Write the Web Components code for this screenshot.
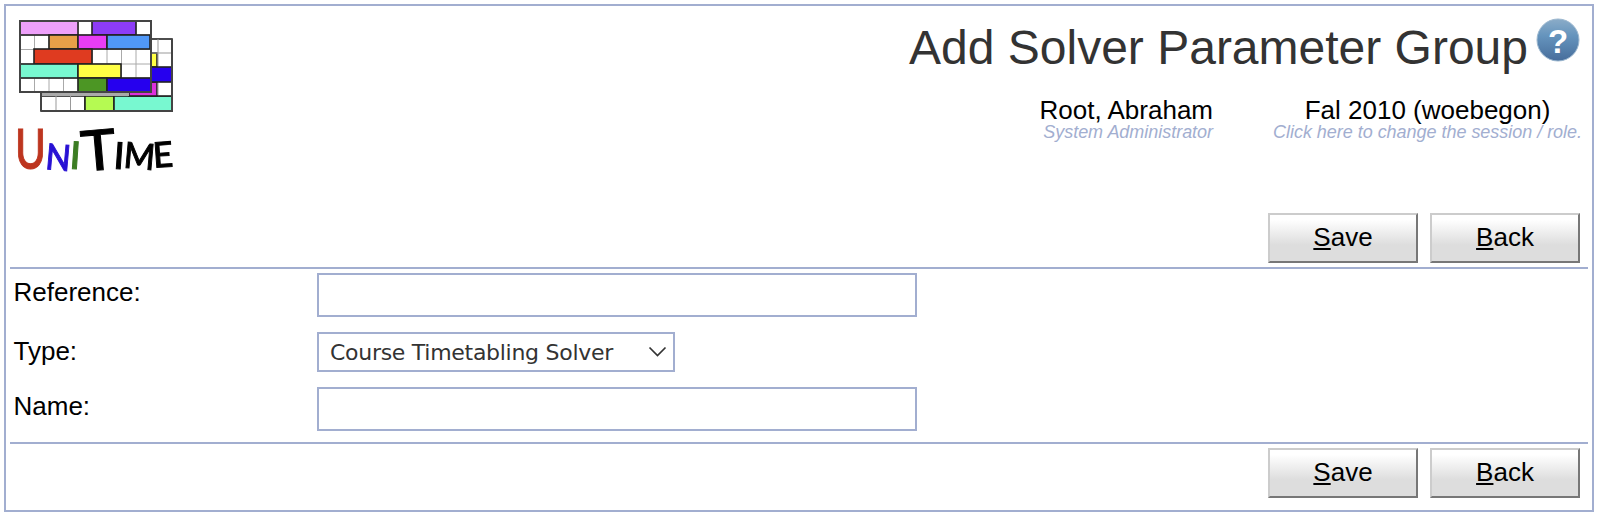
<!DOCTYPE html>
<html lang="en">
<head>
<meta charset="utf-8">
<title>Add Solver Parameter Group</title>
<style>
html{background:#fff}
body{margin:0;padding:4px 6px 4px 4px;font-family:"Liberation Sans",Arial,sans-serif;font-size:26px;color:#000;--line:#a2aed0}
</style>
</head>
<body>
<ut-page>
  <ut-header>
    <ut-logo slot="logo"></ut-logo>
    <span slot="title">Add Solver Parameter Group</span>
    <ut-help slot="help"></ut-help>
    <ut-info slot="info">Root, Abraham<span slot="note">System Administrator</span></ut-info>
    <ut-info slot="info">Fal 2010 (woebegon)<span slot="note">Click here to change the session / role.</span></ut-info>
  </ut-header>
  <ut-buttons><ut-button key="S">ave</ut-button><ut-button key="B">ack</ut-button></ut-buttons>
  <ut-form>
    <ut-field label="Reference:"><ut-input></ut-input></ut-field>
    <ut-field label="Type:"><ut-select>Course Timetabling Solver</ut-select></ut-field>
    <ut-field label="Name:"><ut-input></ut-input></ut-field>
  </ut-form>
  <ut-buttons><ut-button key="S">ave</ut-button><ut-button key="B">ack</ut-button></ut-buttons>
</ut-page>
<script>
const define = (name, render) => customElements.define(name, class extends HTMLElement {
  constructor() {
    super();
    this.attachShadow({mode: 'open'});
  }
  connectedCallback() {
    this.shadowRoot.innerHTML = render(this);
  }
});

define('ut-page', () => `<style>
:host{display:flex;flex-direction:column;box-sizing:border-box;height:508px;border:2px solid var(--line);padding:4px}
</style><slot></slot>`);

define('ut-header', () => `<style>
:host{display:flex;justify-content:space-between;height:199px}
.right{display:flex;flex-direction:column;align-items:flex-end;padding-right:6px}
.title{display:flex;align-items:flex-start;gap:8px;height:84px;padding-right:2px;color:#333;font-size:48px;line-height:54px}
.text{padding-top:11px}
.help{padding-top:8px}
.info{display:flex;gap:60px}
</style><slot name="logo"></slot>
<div class="right"><div class="title"><div class="text"><slot name="title"></slot></div><div class="help"><slot name="help"></slot></div></div>
<div class="info"><slot name="info"></slot></div></div>`);

define('ut-info', () => `<style>
:host{display:flex;flex-direction:column;align-items:center;line-height:30px}
.note{font-size:18px;line-height:20px;font-style:italic;color:var(--line);margin-top:-2px;align-self:flex-end;letter-spacing:-.03px}
.name{padding-top:1px;height:29px}
</style><div class="name"><slot></slot></div><div class="note"><slot name="note"></slot></div>`);

define('ut-help', () => `<style>
:host{display:block;width:44px;height:44px}svg{display:block;overflow:visible}
text{font:bold 33px/1 "Liberation Sans",sans-serif;fill:#fff}
</style><svg width="44" height="44" viewBox="0 0 44 44">
<defs><linearGradient id="g" x2="0" y2="1"><stop offset="0" stop-color="#8bacc8"/><stop offset=".4" stop-color="#6594bd"/><stop offset="1" stop-color="#476d9b"/></linearGradient></defs>
<circle cx="22" cy="22" r="21" fill="url(#g)" stroke="#9bb7cf"/>
<text x="22" y="34.500" text-anchor="middle">?</text></svg>`);

/* Timetable blocks: x, y, width, height, fill */
const back = [[41,96,44,15,'#fff'],[85,96,29,15,'#b5fa52'],[114,96,58,15,'#78f8d0'],[151,39,21,57,'#fff'],[129,82,28,14,'#dd30dd'],[151,53,6,14,'#ffff45'],[151,67,21,15,'#2600ee']];
const front = [[20,21,58,14,'#eea0fa'],[92,21,44,14,'#8d3cf7'],[49,35,29,14,'#e79f48'],[78,35,29,14,'#e83df5'],[107,35,43,14,'#5098f8'],[34,49,58,15,'#df3b20'],[20,64,58,14,'#78f8d0'],[78,64,43,14,'#ffff45'],[78,78,29,14,'#4c9624'],[107,78,44,14,'#2600ee']];
const block = ([x, y, w, h, f]) => `<rect x="${x}" y="${y}" width="${w}" height="${h}" fill="${f}" stroke="#222" stroke-width="1.6"/>`;
define('ut-logo', () => `<style>
:host{display:block;width:180px;height:180px}svg{display:block}
.art{filter:blur(.5px)}
text{font-family:Lato,"Liberation Sans",sans-serif;font-weight:500}
</style><svg width="180" height="180" viewBox="10 10 180 180">
<g class="art">
${back.map(block).join('')}
<path d="M56 96V111M70.500 96V111M158 39V66M158 83V95M152 53H172" stroke="#999" fill="none"/>
<rect x="41" y="92" width="88" height="4" fill="#aaa"/>
<path d="M41 111V92M172 39V111H41" stroke="#444" stroke-width="2" fill="none"/>
<rect x="20" y="21" width="131" height="71" fill="#fff"/>
<path d="M34.500 21V92M49 21V92M63.500 21V92M78 21V92M92.500 21V92M107 21V92M121.500 21V92M136 21V92M20 35H151M20 49.500H151M20 64H151M20 78H151" stroke="#aaa" fill="none"/>
${front.map(block).join('')}
<rect x="20" y="21" width="131" height="71" fill="none" stroke="#444" stroke-width="2"/>
</g>
<g class="art">
<text font-size="55" textLength="31" lengthAdjust="spacingAndGlyphs" x="15" y="169" fill="#bd351f" stroke="#bd351f">U</text>
<text font-size="36" textLength="25" lengthAdjust="spacingAndGlyphs" x="46" y="170" fill="#2811d4" stroke="#2811d4" transform="rotate(5 58 156)">N</text>
<text font-size="38" x="70" y="169" fill="#3c7d23" stroke="#3c7d23" transform="rotate(4 76 156)">I</text>
<text font-size="56" textLength="35" lengthAdjust="spacingAndGlyphs" x="81" y="170" stroke="#000" transform="rotate(-5 99 150)">T</text>
<text font-size="37" x="114" y="169" stroke="#000" transform="rotate(4 120 156)">I</text>
<text font-size="36" textLength="31" lengthAdjust="spacingAndGlyphs" x="124" y="169" stroke="#000" transform="rotate(5 140 156)">M</text>
<text font-size="35" textLength="20" lengthAdjust="spacingAndGlyphs" x="153" y="167" stroke="#000" transform="rotate(-4 163 156)">E</text>
</g></svg>`);

define('ut-buttons', () => `<style>
:host{display:flex;justify-content:flex-end;gap:12px;padding:4px 8px 4px 0}
</style><slot></slot>`);

define('ut-button', el => `<style>
:host{display:block}
button{display:block;box-sizing:border-box;width:150px;height:50px;margin:0;padding:0 0 2px;border:2px solid;border-color:#ccc #777 #777 #ccc;background:linear-gradient(#fff 10%,#ddd 65%,#ddd);font:inherit;color:#000}
u{text-decoration-thickness:2px;text-underline-offset:2px;text-decoration-skip-ink:none}
</style><button><u>${el.getAttribute('key')}</u><slot></slot></button>`);

define('ut-form', () => `<style>
:host{display:flex;flex-direction:column;gap:15px;border:solid var(--line);border-width:2px 0;padding:4px 0 11px 4px}
</style><slot></slot>`);

define('ut-field', el => `<style>
:host{display:grid;grid-template-columns:303px 600px;line-height:30px}
label{padding-top:4px;margin-left:-.5px}
</style><label>${el.getAttribute('label')}</label><slot></slot>`);

define('ut-input', () => `<style>
:host{display:block}
input{display:block;box-sizing:border-box;width:600px;height:44px;margin:0;border:2px solid var(--line);background:#fff;font:inherit;outline:0}
</style><input>`);

define('ut-select', () => `<style>
:host{display:flex;box-sizing:border-box;width:358px;height:40px;border:2px solid var(--line);padding:0 6px 0 11px;align-items:center;justify-content:space-between;font-family:"DejaVu Sans",sans-serif;font-size:22px;letter-spacing:-.28px;color:#333;white-space:nowrap}
span{padding-top:2px}
svg{flex:none}
</style><span><slot></slot></span><svg width="19" height="12" viewBox="0 0 19 12"><path d="M1.500 1.500L9.500 9.500L17.500 1.500" fill="none" stroke="#333" stroke-width="1.700"/></svg>`);
</script>
</body>
</html>
